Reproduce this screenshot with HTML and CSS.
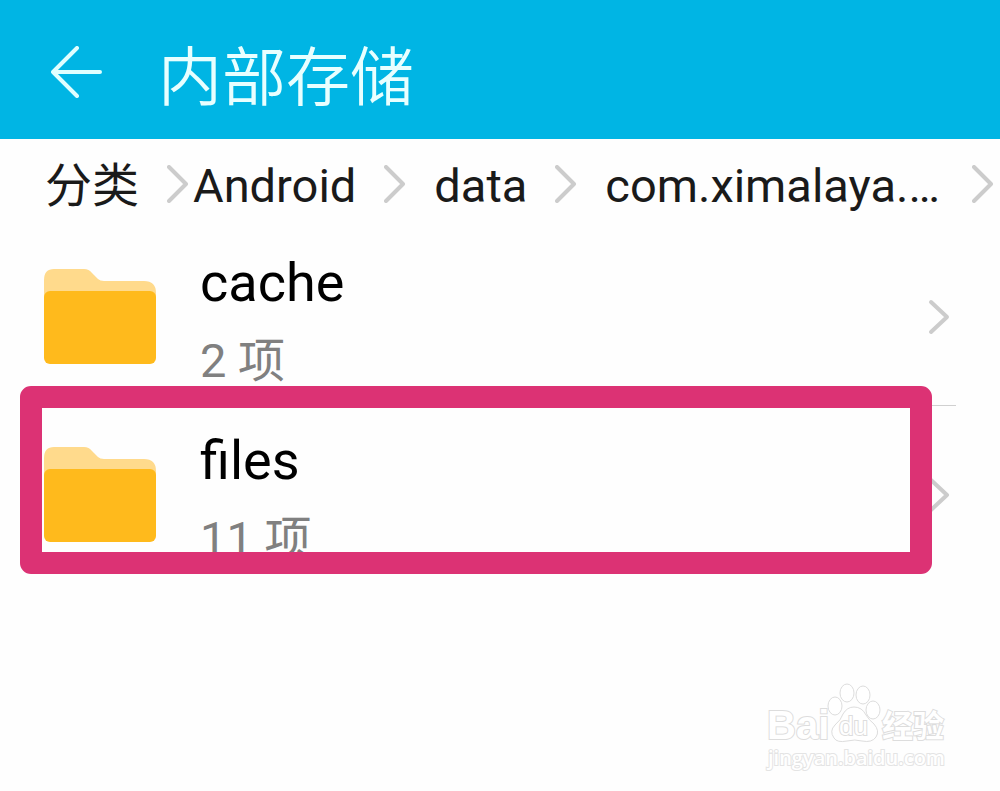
FILE: index.html
```html
<!DOCTYPE html>
<html lang="zh-CN">
<head>
    <meta charset="UTF-8">
    <meta name="viewport" content="width=device-width, initial-scale=1">
    <title>内部存储</title>
    <link rel="stylesheet" href="styles.css">
</head>
<body>
    <header class="header">
        <button class="back-btn" type="button" aria-label="返回">
            <svg width="52" height="52" viewBox="0 0 52 52">
                <path d="M26 2 L2 26 L26 50 M2 26 H49"/>
            </svg>
        </button>
        <h1>内部存储</h1>
    </header>

    <nav class="breadcrumb">
        <a class="crumb" href="#">分类</a>
        <svg class="chevron" width="22" height="38" viewBox="0 0 22 38"><path d="M2 2 L19 19 L2 36"/></svg>
        <a class="crumb crumb-first" href="#">Android</a>
        <svg class="chevron" width="22" height="38" viewBox="0 0 22 38"><path d="M2 2 L19 19 L2 36"/></svg>
        <a class="crumb" href="#">data</a>
        <svg class="chevron" width="22" height="38" viewBox="0 0 22 38"><path d="M2 2 L19 19 L2 36"/></svg>
        <a class="crumb crumb-long" href="#">com.ximalaya.…</a>
        <svg class="chevron" width="22" height="38" viewBox="0 0 22 38"><path d="M2 2 L19 19 L2 36"/></svg>
    </nav>

    <main>
        <ul class="file-list">
            <li class="file-item">
                <a class="file-link" href="#">
                    <svg class="folder" width="112" height="96" viewBox="0 0 112 96">
                        <path class="folder-back" d="M0 40 V11 Q0 0 10 0 H40 Q45 0 48 4 L54 10 Q56 12 60 12 H100 Q112 12 112 24 V40 Z"/>
                        <rect class="folder-front" x="0" y="22" width="112" height="73" rx="6"/>
                    </svg>
                    <span class="file-info">
                        <span class="file-name">cache</span>
                        <span class="file-count">2 项</span>
                    </span>
                    <svg class="chevron" width="22" height="38" viewBox="0 0 22 38"><path d="M3 4 L19 19 L3 34"/></svg>
                </a>
            </li>
            <li class="file-item">
                <a class="file-link" href="#">
                    <svg class="folder" width="112" height="96" viewBox="0 0 112 96">
                        <path class="folder-back" d="M0 40 V11 Q0 0 10 0 H40 Q45 0 48 4 L54 10 Q56 12 60 12 H100 Q112 12 112 24 V40 Z"/>
                        <rect class="folder-front" x="0" y="22" width="112" height="73" rx="6"/>
                    </svg>
                    <span class="file-info">
                        <span class="file-name">files</span>
                        <span class="file-count">11 项</span>
                    </span>
                    <svg class="chevron" width="22" height="38" viewBox="0 0 22 38"><path d="M3 4 L19 19 L3 34"/></svg>
                </a>
                <div class="highlight"></div>
            </li>
        </ul>
    </main>

    <svg class="watermark" width="184" height="92" viewBox="0 0 184 92">
        <text class="wm-latin" x="2" y="57">Bai</text>
        <ellipse cx="70" cy="24" rx="7" ry="9"/>
        <ellipse cx="82" cy="11" rx="7" ry="9"/>
        <ellipse cx="98" cy="13" rx="7" ry="9"/>
        <ellipse cx="108" cy="28" rx="7" ry="9"/>
        <path d="M89 25 Q97 25 101 33 Q104 38 109 42 Q115 49 111 55 Q107 61 97 59 Q90 57 82 59 Q72 61 69 56 Q64 49 70 43 Q76 38 78 32 Q82 25 89 25 Z"/>
        <text class="wm-du" x="74" y="53">du</text>
        <text class="wm-cjk" x="117" y="55">经验</text>
        <text class="wm-url" x="3" y="83">jingyan.baidu.com</text>
    </svg>
</body>
</html>
```
FILE: styles.css
```css
* {
    box-sizing: border-box;
}
body {
    margin: 0;
    min-height: 100vh;
    position: relative;
    overflow-x: hidden;
    background: #fefefe;
    color: #000;
    font-family: Roboto, "Noto Sans CJK SC", sans-serif;
}
a {
    color: inherit;
    text-decoration: none;
}
svg {
    display: block;
    flex-shrink: 0;
}
.header {
    display: flex;
    align-items: center;
    gap: 55px;
    padding: 20px 51px 15px;
    background: #00b5e4;
    color: #e8ffff;
}
.header h1 {
    margin: 0;
    font-family: "Noto Sans CJK SC", sans-serif;
    font-size: 64px;
    line-height: 104px;
    font-weight: 350;
}
.back-btn {
    padding: 0;
    border: none;
    background: none;
    cursor: pointer;
}
.back-btn path {
    fill: none;
    stroke: #e0ffff;
    stroke-width: 4;
    stroke-linecap: round;
    stroke-linejoin: round;
}
.chevron path {
    fill: none;
    stroke: #cccccc;
    stroke-width: 4;
    stroke-linecap: round;
    stroke-linejoin: round;
}

.breadcrumb {
    display: flex;
    align-items: center;
    gap: 28px;
    height: 89px;
    padding-left: 45px;
    color: #1a1a1a;
    font-size: 47px;
    line-height: 60px;
    white-space: nowrap;
}
.crumb {
    padding-top: 4px;
}
.crumb-first {
    margin-left: -24px;
}
.crumb-long {
    padding-right: 4px;
}

.file-list {
    margin: 0;
    padding: 0;
    list-style: none;
}
.file-item {
    position: relative;
}
.file-link {
    display: flex;
    align-items: center;
    gap: 44px;
    height: 178px;
    padding: 0 50px 0 44px;
}
.folder-back {
    fill: #ffda8c;
}
.folder-front {
    fill: #ffba1c;
}
.file-info {
    flex: 1;
    display: flex;
    flex-direction: column;
    gap: 20px;
    padding-top: 4px;
}
.file-name {
    font-size: 54px;
    line-height: 64px;
}
.file-count {
    color: #808080;
    font-size: 47px;
    line-height: 52px;
}
/* divider between rows */
.file-item + .file-item::before {
    content: "";
    position: absolute;
    top: -1px;
    left: 200px;
    right: 44px;
    height: 1px;
    background: #d0d0d0;
}
.highlight {
    position: absolute;
    top: -20px;
    bottom: 10px;
    left: 20px;
    right: 68px;
    border: 22px solid #dc3274;
    border-radius: 11px;
    pointer-events: none;
}

.watermark {
    position: absolute;
    right: 51px;
    bottom: 17px;
    fill: #fff;
    stroke: #dddddd;
    stroke-width: 1;
}
.watermark text {
    font-family: "Liberation Sans", "Noto Sans CJK SC", sans-serif;
    font-weight: 700;
    stroke-width: 2;
    paint-order: stroke;
}
.watermark .wm-latin {
    font-size: 40px;
}
.watermark .wm-du {
    font-size: 26px;
    font-weight: 400;
}
.watermark .wm-cjk {
    font-size: 31px;
}
.watermark .wm-url {
    font-family: "Open Sans", sans-serif;
    font-size: 20px;
    font-weight: 600;
    stroke: #e4e4e4;
}
```
